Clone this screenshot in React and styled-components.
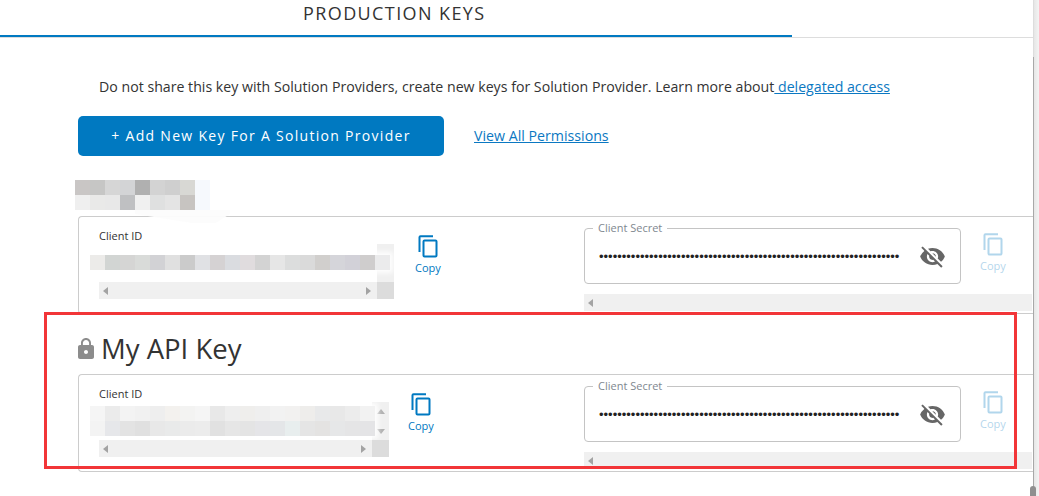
import React from "react";
import styled, { createGlobalStyle } from "styled-components";
import { MdLock, MdVisibilityOff } from "react-icons/md";

const Global = createGlobalStyle`
  html, body { margin: 0; padding: 0; background: #fff; overflow: hidden; }
  body { font-family: "Open Sans", "Liberation Sans", sans-serif; color: #333; }
  * { box-sizing: border-box; }
`;

const Page = styled.div`
  position: relative;
  display: flex;
  width: 1039px;
  height: 496px;
  overflow: hidden;
  background: #fff;
`;
const Main = styled.main`
  width: 1033px;
  flex: none;
`;
const TabBar = styled.div`
  height: 35px;
  padding: 1px 0 0 303px;
  font-size: 18px;
  line-height: 24px;
  letter-spacing: 1.4px;
  color: #333;
  text-transform: uppercase;
`;
const TabRule = styled.div`
  height: 3px;
  border-bottom: 1px solid #ddd;
`;
const TabIndicator = styled.div`
  width: 792px;
  height: 2px;
  background: #0079c1;
`;
const Content = styled.div`
  padding-left: 78px;
`;
const Notice = styled.p`
  margin: 39px 0 0 21px;
  font-size: 14.16px;
  line-height: 20px;
  color: #333;
  white-space: nowrap;
`;
const TextLink = styled.a`
  color: #0b78c2;
  text-decoration: underline;
  white-space: pre;
`;
const PermissionsLink = styled(TextLink)`
  font-size: 14.2px;
  margin-top: -2px;
`;
const Actions = styled.div`
  display: flex;
  align-items: center;
  gap: 30px;
  margin-top: 19px;
`;
const PrimaryButton = styled.button`
  width: 366px;
  height: 40px;
  padding: 0 0 2px;
  border: 0;
  border-radius: 5px;
  background: #0079c1;
  color: #fff;
  font-family: inherit;
  font-size: 14px;
  font-weight: 500;
  letter-spacing: 1.3px;
`;
const Tile = styled.i`
  display: block;
  width: 15px;
  height: 15px;
  background: ${(p) => p.$color};
`;
const MosaicRows = styled.div`
  display: grid;
  grid-template-columns: repeat(${(p) => p.$cols}, 15px);
  width: max-content;
`;
const TitleMosaic = styled(MosaicRows)`
  position: relative;
  margin: 24px 0 6px -3px;
  &::after {
    content: "";
    position: absolute;
    left: 60px;
    top: 30px;
    width: 95px;
    height: 13px;
    background: rgba(252, 252, 252, 0.95);
    clip-path: polygon(0 0, 100% 0, 100% 30%, 85% 100%, 60% 100%, 0 30%);
  }
`;
const FieldMosaic = styled(MosaicRows)`
  position: absolute;
  left: -9px;
  top: ${(p) => p.$top}px;
  box-shadow: 0 0 5px 3px rgba(255, 255, 255, 0.9);
  border-radius: 8px 0 0 8px;
`;
const Card = styled.section`
  display: grid;
  grid-template-columns: ${(p) => p.$client}px 1fr 375px 74px;
  height: 98px;
  border: 1px solid #ccc;
  border-right: 0;
  border-radius: 4px 0 0 4px;
`;
const KeyTitle = styled.h2`
  display: flex;
  align-items: center;
  height: 60px;
  margin: 0 0 0 -4px;
  padding-top: 9px;
  font-size: 27.5px;
  font-weight: 400;
  color: #333;
`;
const LockIcon = styled(MdLock)`
  flex: none;
  width: 24px;
  height: 24px;
  color: #8c8c8c;
  margin: 0 3px 0 0;
`;
const ClientField = styled.div`
  padding: 11px 0 0 20px;
`;
const FieldLabel = styled.div`
  height: 16px;
  font-size: 11px;
  line-height: 16px;
  color: #333;
`;
const ScrollBox = styled.div`
  position: relative;
  display: flex;
  justify-content: flex-end;
  height: 38px;
`;
const VBar = styled.div`
  display: flex;
  flex-direction: column;
  align-items: center;
  justify-content: space-between;
  width: 17px;
  padding: 7px 0 6px;
  background: #f0f0f0;
`;
const HBar = styled.div`
  display: flex;
  align-items: center;
  justify-content: space-between;
  height: 17px;
  padding: 0 ${(p) => (p.$corner ? 23 : 4)}px 0 4px;
  background: #f0f0f0;
  position: relative;
`;
const Corner = styled.div`
  position: absolute;
  right: 0;
  top: 0;
  width: 17px;
  height: 17px;
  background: #dcdcdc;
`;
const Arrow = styled.span`
  width: 0;
  height: 0;
  border-style: solid;
  border-color: transparent;
  ${(p) =>
    p.$dir === "left" && `border-width: 4px 5px 4px 0; border-right-color: #a3a3a3;`}
  ${(p) =>
    p.$dir === "right" && `border-width: 4px 0 4px 5px; border-left-color: #a3a3a3;`}
  ${(p) =>
    p.$dir === "up" && `border-width: 0 4px 5px; border-bottom-color: #b0b0b0;`}
  ${(p) =>
    p.$dir === "down" && `border-width: 5px 4px 0; border-top-color: #b0b0b0;`}
`;
const CopyAction = styled.button`
  display: flex;
  flex-direction: column;
  align-items: flex-start;
  align-self: start;
  width: 44px;
  margin: ${(p) => (p.$dim ? 16 : 18)}px 0 0 ${(p) => p.$gap}px;
  padding: 0;
  border: 0;
  background: none;
  font-family: inherit;
  font-size: 11px;
  line-height: 16px;
  color: #0079c1;
  opacity: ${(p) => (p.$dim ? 0.3 : 1)};
`;
const CopyText = styled.span`
  margin: 2px 0 0 -3px;
`;
const SecretColumn = styled.div`
  padding-top: 4px;
`;
const SecretBox = styled.fieldset`
  display: flex;
  align-items: center;
  height: 63px;
  margin: 0;
  padding: 0 14px;
  border: 1px solid #c4c4c4;
  border-radius: 4px;
`;
const SecretLegend = styled.legend`
  margin-left: -6px;
  padding: 0 5px;
  font-size: 11px;
  line-height: 14px;
  color: #808890;
`;
const Dots = styled.div`
  width: 301px;
  margin-top: -4px;
  font-family: "Liberation Sans", sans-serif;
  font-size: 13px;
  line-height: 16px;
  color: #222;
  white-space: nowrap;
`;
const EyeIcon = styled(MdVisibilityOff)`
  flex: none;
  width: 27px;
  height: 27px;
  margin: -6px 0 0 19px;
  color: #666;
`;
const SecretBar = styled(HBar)`
  margin: 10px -73px 0 0;
`;
const Scrollbar = styled.aside`
  flex: 1;
  background: linear-gradient(90deg, #e6e6e6, #f4f4f4);
  border-left: 1px solid #ddd;
`;
const ScrollThumb = styled.div`
  position: absolute;
  left: 1030px;
  top: 486px;
  width: 6px;
  height: 14px;
  border-radius: 3px 3px 0 0;
  background: #8f8f8f;
`;
const ScrollLine = styled.div`
  position: absolute;
  left: 1033px;
  top: 57px;
  bottom: 0;
  width: 1px;
  background: #a8a8a8;
`;
const Highlight = styled.div`
  position: absolute;
  left: 44px;
  top: 312px;
  width: 973px;
  height: 157px;
  border: 3px solid #f23538;
  pointer-events: none;
`;

const CopyIcon = () => (
  <svg width="20" height="23" viewBox="0 0 20 23" fill="none" stroke="#0079c1" strokeWidth="2">
    <path d="M1.5 17V2.2q0-1 1-1H15" />
    <rect x="5.5" y="5.5" width="13" height="16" rx="1" />
  </svg>
);

const Mosaic = ({ as: Comp, rows, ...rest }) => (
  <Comp $cols={rows[0].length} {...rest}>
    {rows.flat().map((c, i) => (
      <Tile key={i} $color={c} />
    ))}
  </Comp>
);

const titleTiles = [
  ["#c9c6c5", "#c6c6c5", "#d6d6d6", "#d3d4d6", "#b0b0b0", "#d3d3d3", "#cfcfcf", "#d8d8d4", "#f6f9fd"],
  ["#efefef", "#e9e9e8", "#e8e8e8", "#bfc0c2", "#f0f0f0", "#dfe0e0", "#e4e4e4", "#c7c4c1", "#f6f9fd"],
];
const firstIdTiles = [
  ["#ecebe9", "#d2d5d3", "#d5d5d4", "#d9dbd9", "#d2d2d5", "#e0e0e0", "#cbcbcb", "#e0e1e4", "#d5d2d3", "#dadce0", "#e0dcde", "#d3d3d3", "#e6e6e6", "#dcdddd", "#dadada", "#d1cfcd", "#d5d5da", "#d2d1d8", "#cfcdcd", "#ebebec"],
];
const secondIdTiles = [
  ["#f5f5f5", "#ebebeb", "#f3f3f3", "#f1f1f1", "#eeeeee", "#f3f1ee", "#f3f3f2", "#f5f5f5", "#e8e8e8", "#eeeeee", "#efeeec", "#efefef", "#f2f2f2", "#f2f1f0", "#eeedeb", "#e8e9ea", "#e8e8e8", "#ececec", "#f2f2f2"],
  ["#f3f3f3", "#e6e7ea", "#e3e3e3", "#e0e0e0", "#e8e8e8", "#e9eaea", "#ebebeb", "#ececec", "#e1e1e1", "#e6e6e6", "#e4e4e4", "#e5e5e8", "#e4e6e8", "#e8eeee", "#e5e5e5", "#e4e3e2", "#e6e7e8", "#e5e5e6", "#e4e4e6"],
];

const KeyCard = ({ client, gap, tiles, mosaicTop, arrows }) => (
  <Card $client={client}>
    <ClientField>
      <FieldLabel>Client ID</FieldLabel>
      <ScrollBox>
        <Mosaic as={FieldMosaic} rows={tiles} $top={mosaicTop} />
        <VBar>
          {arrows && <Arrow $dir="up" />}
          {arrows && <Arrow $dir="down" />}
        </VBar>
      </ScrollBox>
      <HBar $corner>
        <Arrow $dir="left" />
        <Arrow $dir="right" />
        <Corner />
      </HBar>
    </ClientField>
    <CopyAction $gap={gap}>
      <CopyIcon />
      <CopyText>Copy</CopyText>
    </CopyAction>
    <SecretColumn>
      <SecretBox>
        <SecretLegend>Client Secret</SecretLegend>
        <Dots>{"•".repeat(66)}</Dots>
        <EyeIcon />
      </SecretBox>
      <SecretBar>
        <Arrow $dir="left" />
      </SecretBar>
    </SecretColumn>
    <CopyAction $dim $gap={24}>
      <CopyIcon />
      <CopyText>Copy</CopyText>
    </CopyAction>
  </Card>
);

export default function App() {
  return (
    <Page>
      <Global />
      <Main>
        <TabBar>Production Keys</TabBar>
        <TabRule>
          <TabIndicator />
        </TabRule>
        <Content>
          <Notice>
            Do not share this key with Solution Providers, create new keys for Solution Provider. Learn more about
            <TextLink href="#">{" delegated access"}</TextLink>
          </Notice>
          <Actions>
            <PrimaryButton>+ Add New Key For A Solution Provider</PrimaryButton>
            <PermissionsLink href="#">View All Permissions</PermissionsLink>
          </Actions>
          <Mosaic as={TitleMosaic} rows={titleTiles} />
          <KeyCard client={315} gap={24} tiles={firstIdTiles} mosaicTop={11} />
          <KeyTitle>
            <LockIcon />
            My API Key
          </KeyTitle>
          <KeyCard client={310} gap={22} tiles={secondIdTiles} mosaicTop={4} arrows />
        </Content>
      </Main>
      <Scrollbar />
      <ScrollLine />
      <ScrollThumb />
      <Highlight />
    </Page>
  );
}
